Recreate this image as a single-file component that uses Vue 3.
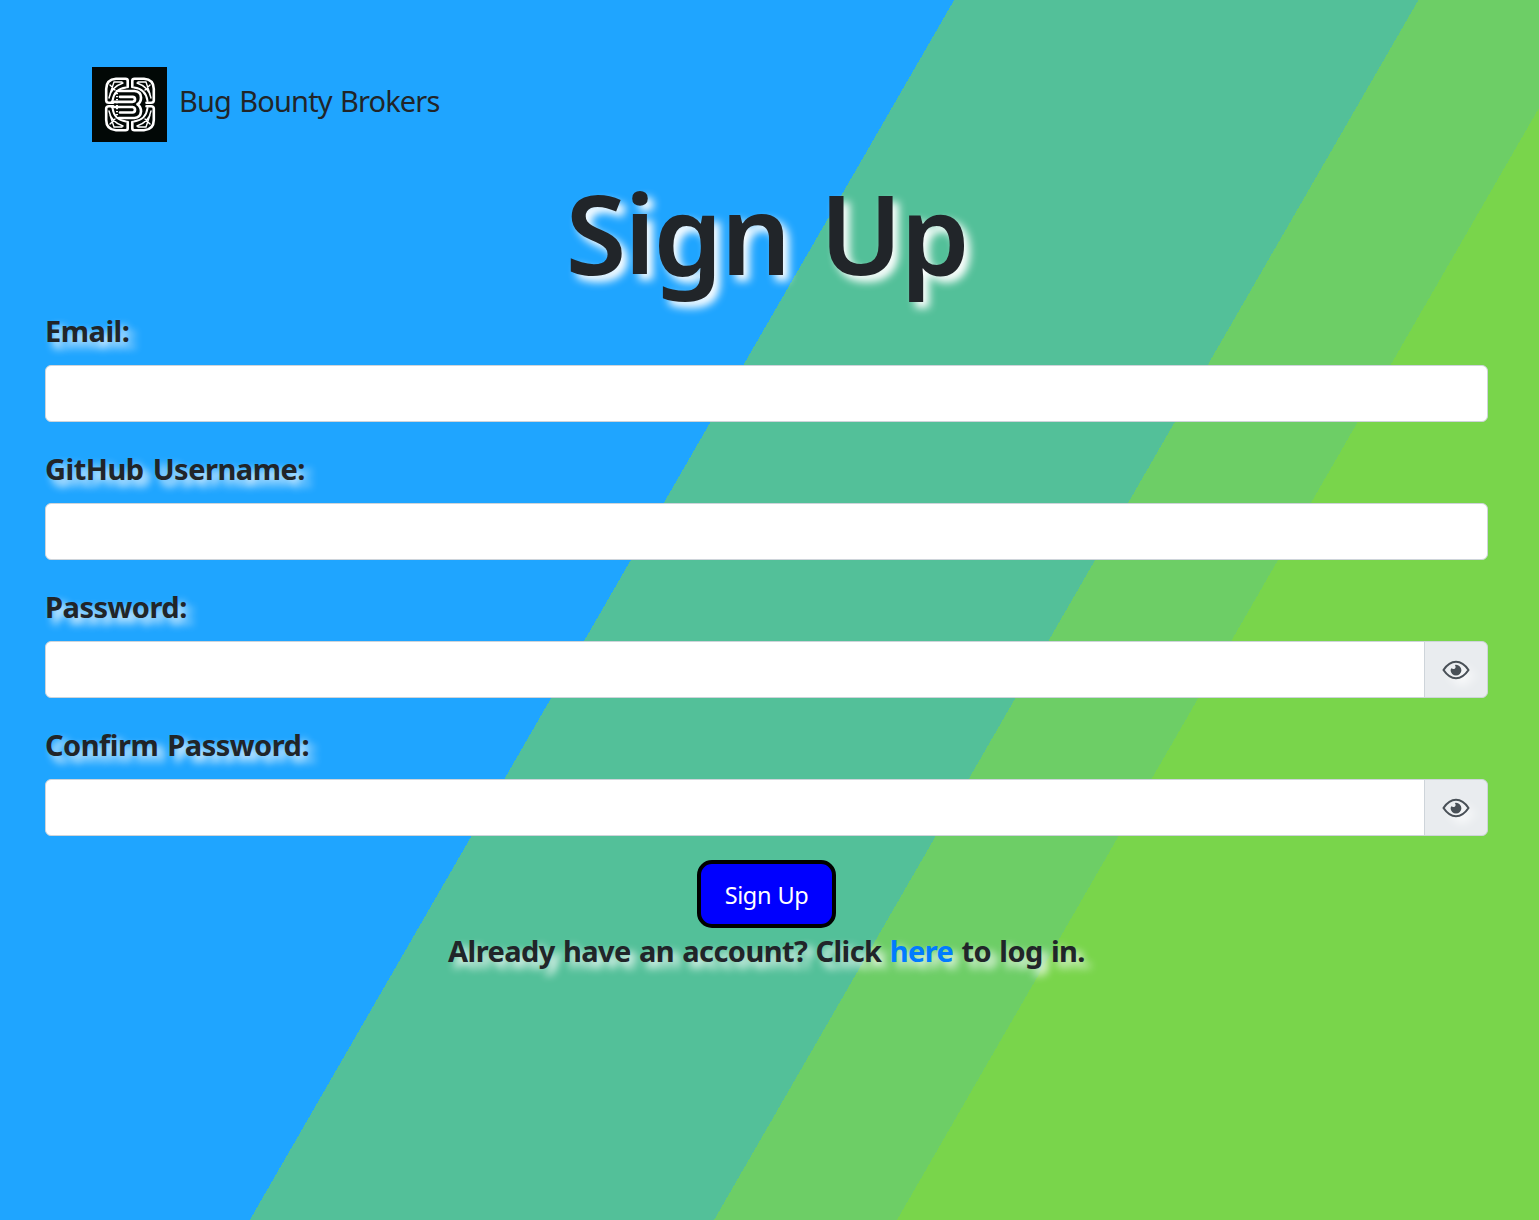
<script setup>
const fields = [
  { id: 'email', label: 'Email:', type: 'email' },
  { id: 'github', label: 'GitHub Username:', type: 'text' },
  { id: 'password', label: 'Password:', type: 'password', secret: true },
  { id: 'confirm', label: 'Confirm Password:', type: 'password', secret: true },
]
</script>

<template>
  <main class="page">
    <header class="brand">
      <svg class="logo" viewBox="0 0 75 75" aria-hidden="true">
        <rect width="75" height="75" fill="#020806" />
        <g fill="none" stroke="#fff" stroke-linecap="round" stroke-linejoin="round">
          <g id="half">
            <path stroke-width="2.6" d="M35.7 20V13.5Q35.7 11.8 33.5 11.8H24Q14.3 12.5 14.2 22V33.5Q14.3 35.8 17 35.8H21" />
            <path stroke-width="2" d="M34 20.5Q22 22 20.5 34" />
            <path stroke-width="1.4" d="M17 31Q19 20 31 16M18 18L23 23M22 15L18 27M22 15L30 15" />
            <path stroke-width="2.6" d="M40.3 20V13.5Q40.3 11.8 42.5 11.8H52Q61.7 12.5 61.8 22V33.5Q61.7 35.8 59 35.8H54.5" />
            <path stroke-width="2" d="M42 20.5Q54 22 55.5 34" />
            <path stroke-width="1.4" d="M59 31Q57 20 45 16M58 18L53 23M54 15L58 27M54 15L46 15" />
          </g>
          <use href="#half" transform="matrix(1 0 0 -1 0 75)" />
          <path stroke-width="2.7" d="M27 24H42.5Q49 24.5 49 30.5Q49 35.5 45.5 37.3Q49 39.5 49 44.5Q48.5 50.5 42.5 51H27M28 29.8H40.5Q43 30 43 32.3Q43 34.8 40.5 34.8H20M20 40H40.5Q43 40.3 43 42.8Q43 45.5 40.5 45.5H28" />
          <path stroke-width="2" stroke-dasharray="1.3 1.7" stroke-linecap="butt" d="M25 23V52" />
        </g>
      </svg>
      <span class="brand-name">Bug Bounty Brokers</span>
    </header>

    <h1>Sign Up</h1>

    <form @submit.prevent>
      <div v-for="f in fields" :key="f.id" class="field">
        <label :for="f.id">{{ f.label }}</label>
        <div class="group">
          <input :id="f.id" :type="f.type" :class="{ joined: f.secret }">
          <span v-if="f.secret" class="addon">
            <svg viewBox="0 0 28 20" aria-hidden="true">
              <path d="M1.5 10Q7 1.8 14 1.8T26.5 10Q21 18.2 14 18.2T1.5 10Z" fill="none" stroke="#495057" stroke-width="2.1" stroke-linejoin="round" />
              <path d="M14 4.8A5.4 5.4 0 1 1 8.6 10.2Q8.8 8.900 9.500 8.300Q11 9.700 12.700 8.700Q14.500 7.300 12.800 5Z" fill="#495057" />
            </svg>
          </span>
        </div>
      </div>
      <button type="submit">Sign Up</button>
    </form>
    <p class="login">Already have an account? Click <a href="#">here</a> to log in.</p>
  </main>
</template>

<style>
body { margin: 0; }
</style>

<style scoped>
* { box-sizing: border-box; }
.page {
  min-height: 1220px;
  padding: 67px 51px 0 45px;
  overflow: hidden;
  color: #212529;
  font-family: "Noto Sans", "Open Sans", sans-serif;
  background: linear-gradient(120deg, #1fa5ff 826.3px, #53c099 826.3px 1228.4px, #6dce66 1228.4px 1386.8px, #79d54b 1386.8px);
}
.brand { display: flex; height: 75px; margin-left: 47px; gap: 12px; }
.logo { width: 75px; height: 75px; }
.brand-name {
  font-size: 29px;
  line-height: 68px;
  letter-spacing: -0.87px;
  word-spacing: 1.7px;
  white-space: nowrap;
}
h1 {
  margin: 19px 0 5px;
  height: 142px;
  font-size: 110.5px;
  font-weight: 600;
  line-height: 142px;
  letter-spacing: -2px;
  word-spacing: 4px;
  text-align: center;
  text-shadow: 6px 6px 8px #fff;
}
.field { height: 138px; }
label {
  display: block;
  height: 57px;
  font-size: 29px;
  font-weight: 700;
  line-height: 46px;
  letter-spacing: -0.5px;
  word-spacing: 2px;
  text-shadow: 6px 6px 8px #fff;
}
.group { display: flex; height: 57px; }
input {
  flex: 1;
  min-width: 0;
  border: 1px solid #ced4da;
  border-radius: 6px;
  background: #fff;
  outline: 0;
}
.joined { border-radius: 6px 0 0 6px; }
.addon {
  display: grid;
  place-items: center;
  width: 64px;
  margin-left: -1px;
  padding-right: 1px;
  border: 1px solid #ced4da;
  border-radius: 0 6px 6px 0;
  background: #e9ecef;
}
.addon svg { width: 28px; height: 20px; filter: drop-shadow(6px 6px 4px #fff); }
button {
  display: block;
  width: 139px;
  height: 68px;
  margin: 0 auto;
  padding: 2px 0 0;
  border: 4px solid #000;
  border-radius: 15px;
  background: #00f;
  color: #fff;
  font: 400 23.5px/58px "Noto Sans", sans-serif;
  letter-spacing: -0.4px;
  word-spacing: 0.7px;
}
.login {
  margin: 0;
  font-size: 29px;
  font-weight: 700;
  line-height: 46px;
  letter-spacing: -0.58px;
  word-spacing: 1.3px;
  text-align: center;
  white-space: nowrap;
  text-shadow: 6px 6px 8px #fff;
}
a { color: #007bff; text-decoration: none; }
</style>
